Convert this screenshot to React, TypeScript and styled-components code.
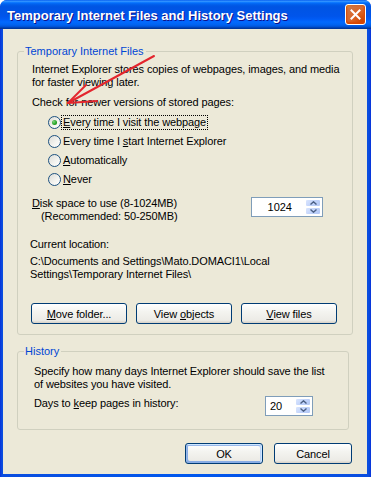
import styled, { createGlobalStyle } from 'styled-components'

const GlobalStyle = createGlobalStyle`
  html, body {
    margin: 0;
    padding: 0;
    background: #ffffff;
  }

  body {
    font-family: "Liberation Sans", Arial, sans-serif;
    font-size: 11px;
    color: #000;
  }
`

const Window = styled.div`
  position: relative;
  width: 371px;
  height: 477px;
  display: flex;
  flex-direction: column;
  background: linear-gradient(to right, #0831d9 0, #0a4ddf 2px, #0058ee 50%, #0a4ddf calc(100% - 2px), #0831d9 100%);
  border-radius: 7px 7px 0 0;
  overflow: hidden;
`

const TitleBar = styled.div`
  height: 29px;
  flex-shrink: 0;
  display: flex;
  align-items: center;
  justify-content: space-between;
  padding: 0 5px 0 7px;
  background: linear-gradient(
    180deg,
    #0058ee 0%,
    #3593ff 4%,
    #288eff 6%,
    #127dff 8%,
    #036ffc 10%,
    #0262ee 14%,
    #0057e5 20%,
    #0054e3 24%,
    #0055eb 56%,
    #005bf5 66%,
    #026afe 76%,
    #0062ef 86%,
    #0052d6 92%,
    #0040ab 96%,
    #003092 100%
  );
`

const Title = styled.div`
  color: #fff;
  font-weight: 700;
  font-size: 13px;
  letter-spacing: 0;
  text-shadow: 1px 1px #0f1089;
  padding-top: 1px;
`

const CloseButton = styled.div`
  width: 21px;
  height: 21px;
  box-sizing: border-box;
  border: 1px solid #fff;
  border-radius: 3px;
  display: flex;
  align-items: center;
  justify-content: center;
  background: radial-gradient(circle at 85% 85%, #cc4600 0%, #dc6527 45%, #cd7546 80%, #e5a01a 100%);
  box-shadow: inset 0 -1px 2px 1px #da4600;
`

const Body = styled.div`
  flex: 1;
  margin: 0 4px 4px 3px;
  background: #ece9d8;
  padding: 16px 14px 10px 14px;
  display: flex;
  flex-direction: column;
`

const GroupBox = styled.fieldset<{ $pad: string; $mr?: number; $mt?: number }>`
  margin: ${p => p.$mt ?? 0}px ${p => p.$mr ?? 0}px 0 0;
  border: 1px solid #d0d0bf;
  border-radius: 3px;
  padding: ${p => p.$pad};
  min-width: 0;
`

const Legend = styled.legend<{ $shift: number }>`
  color: #0046d5;
  line-height: 13px;
  padding: 0 2px 0 1px;
  margin-left: ${p => p.$shift}px;
`

const Text = styled.div<{ $indent?: number; $mt?: number }>`
  line-height: 13px;
  margin-left: ${p => p.$indent ?? 0}px;
  margin-top: ${p => p.$mt ?? 0}px;
  white-space: nowrap;
  letter-spacing: -0.1px;
`

const U = styled.span`
  text-decoration: underline;
  text-underline-offset: 1px;
`

const RadioList = styled.div`
  margin: 4px 0 0 16px;
  display: flex;
  flex-direction: column;
`

const RadioRow = styled.div`
  height: 19px;
  display: flex;
  align-items: center;
  gap: 1px;
`

const RadioCircle = styled.span<{ $checked?: boolean }>`
  width: 13px;
  height: 13px;
  box-sizing: border-box;
  border-radius: 50%;
  border: 1px solid #1c5180;
  background: linear-gradient(135deg, #dcdcd7 0%, #f4f4f0 60%, #ffffff 100%);
  display: flex;
  align-items: center;
  justify-content: center;
  flex-shrink: 0;

  &::after {
    content: '';
    display: ${p => (p.$checked ? 'block' : 'none')};
    width: 5px;
    height: 5px;
    border-radius: 50%;
    background: radial-gradient(circle at 35% 35%, #7ed57e 0%, #21a121 60%, #1a7e1a 100%);
  }
`

const RadioLabel = styled.span<{ $focused?: boolean }>`
  line-height: 13px;
  padding: 0 1px;
  outline: ${p => (p.$focused ? '1px dotted #000' : 'none')};
  outline-offset: 0;
  letter-spacing: -0.1px;
`

const SettingRow = styled.div<{ $mt: number; $pr: number }>`
  display: flex;
  justify-content: space-between;
  align-items: flex-start;
  margin-top: ${p => p.$mt}px;
  padding-right: ${p => p.$pr}px;
`

const Spinner = styled.div<{ $width: number }>`
  width: ${p => p.$width}px;
  height: 20px;
  box-sizing: border-box;
  border: 1px solid #7f9db9;
  background: #fff;
  display: flex;
`

const SpinValue = styled.div<{ $align: 'left' | 'right' }>`
  flex: 1;
  line-height: 18px;
  text-align: ${p => p.$align};
  padding: ${p => (p.$align === 'right' ? '0 13px 0 0' : '0 0 0 4px')};
`

const SpinButtons = styled.div`
  width: 16px;
  padding: 1px 1px 1px 0;
  display: flex;
  flex-direction: column;
  gap: 0;
`

const SpinButton = styled.div`
  flex: 1;
  border: 1px solid #fff;
  border-radius: 2px;
  background: linear-gradient(135deg, #dbe6fd 0%, #c1d3fb 50%, #b2c7f5 100%);
  display: flex;
  align-items: center;
  justify-content: center;
`

const ButtonRow = styled.div`
  display: flex;
  gap: 9px;
  margin: 22px 0 0 -1px;
`

const XpButton = styled.button<{ $width: number; $default?: boolean }>`
  width: ${p => p.$width}px;
  height: 21px;
  box-sizing: border-box;
  padding: 0;
  font-family: "Liberation Sans", Arial, sans-serif;
  font-size: 11px;
  color: #000;
  letter-spacing: -0.1px;
  border: 1px solid #003c74;
  border-radius: 3px;
  background: linear-gradient(180deg, #ffffff 0%, #f4f4f0 40%, #ecebe6 86%, #d6d0c5 100%);
  box-shadow: ${p =>
    p.$default
      ? 'inset -1px 1px #cee7ff, inset 1px 2px #98b8ea, inset -2px 2px #bcd4f6, inset 1px -1px #89ade4, inset 2px -2px #89ade4'
      : 'none'};
`

const Footer = styled.div`
  display: flex;
  justify-content: flex-end;
  gap: 11px;
  margin-top: 13px;
  padding-right: 1px;
`

const ArrowOverlay = styled.svg`
  position: absolute;
  left: 0;
  top: 0;
  pointer-events: none;
`

function Chevron({ up }: { up?: boolean }) {
  return (
    <svg width="7" height="4" viewBox="0 0 7 4">
      <polyline
        points={up ? '0.5,3.5 3.5,0.8 6.5,3.5' : '0.5,0.5 3.5,3.2 6.5,0.5'}
        fill="none"
        stroke="#4d6185"
        strokeWidth="1.4"
      />
    </svg>
  )
}

function SpinBox({ value, width, align }: { value: string; width: number; align: 'left' | 'right' }) {
  return (
    <Spinner $width={width}>
      <SpinValue $align={align}>{value}</SpinValue>
      <SpinButtons>
        <SpinButton><Chevron up /></SpinButton>
        <SpinButton><Chevron /></SpinButton>
      </SpinButtons>
    </Spinner>
  )
}

function Radio({ checked, focused, children }: { checked?: boolean; focused?: boolean; children: React.ReactNode }) {
  return (
    <RadioRow>
      <RadioCircle $checked={checked} />
      <RadioLabel $focused={focused}>{children}</RadioLabel>
    </RadioRow>
  )
}

export default function App () {
  return (
    <>
      <GlobalStyle />
      <Window>
        <TitleBar>
          <Title>Temporary Internet Files and History Settings</Title>
          <CloseButton>
            <svg width="11" height="11" viewBox="0 0 11 11">
              <path d="M1.5 1.5 L9.5 9.5 M9.5 1.5 L1.5 9.5" stroke="#fff" strokeWidth="2" strokeLinecap="square" />
            </svg>
          </CloseButton>
        </TitleBar>

        <Body>
          <GroupBox $pad="5px 15px 10px 14px">
            <Legend $shift={-8}>Temporary Internet Files</Legend>
            <Text>Internet Explorer stores copies of webpages, images, and media</Text>
            <Text>for faster viewing later.</Text>
            <Text $mt={7}>Check for newer versions of stored pages:</Text>

            <RadioList>
              <Radio checked focused><U>E</U>very time I visit the webpage</Radio>
              <Radio>Every time I <U>s</U>tart Internet Explorer</Radio>
              <Radio><U>A</U>utomatically</Radio>
              <Radio><U>N</U>ever</Radio>
            </RadioList>

            <SettingRow $mt={8} $pr={14}>
              <div>
                <Text><U>D</U>isk space to use (8-1024MB)</Text>
                <Text $indent={9}>(Recommended: 50-250MB)</Text>
              </div>
              <SpinBox value="1024" width={72} align="right" />
            </SettingRow>

            <Text $indent={-2} $mt={15}>Current location:</Text>
            <Text $indent={-2} $mt={4}>C:\Documents and Settings\Mato.DOMACI1\Local</Text>
            <Text $indent={-2}>Settings\Temporary Internet Files\</Text>

            <ButtonRow>
              <XpButton $width={96}><U>M</U>ove folder...</XpButton>
              <XpButton $width={96}>View <U>o</U>bjects</XpButton>
              <XpButton $width={96}><U>V</U>iew files</XpButton>
            </ButtonRow>
          </GroupBox>

          <GroupBox $pad="7px 15px 13px 16px" $mr={4} $mt={10}>
            <Legend $shift={-10}>History</Legend>
            <Text>Specify how many days Internet Explorer should save the list</Text>
            <Text>of websites you have visited.</Text>
            <SettingRow $mt={5} $pr={20}>
              <Text $mt={1}>Days to <U>k</U>eep pages in history:</Text>
              <SpinBox value="20" width={48} align="left" />
            </SettingRow>
          </GroupBox>

          <Footer>
            <XpButton $width={78} $default>OK</XpButton>
            <XpButton $width={78}>Cancel</XpButton>
          </Footer>
        </Body>

        <ArrowOverlay width="371" height="477" viewBox="0 0 371 477">
          <g stroke="#e3262e" strokeWidth="2" strokeLinecap="round" fill="none">
            <line x1="154" y1="56" x2="68" y2="103" />
            <line x1="68" y1="103" x2="86" y2="85" />
            <line x1="68" y1="103" x2="97" y2="101" />
          </g>
        </ArrowOverlay>
      </Window>
    </>
  )
}
